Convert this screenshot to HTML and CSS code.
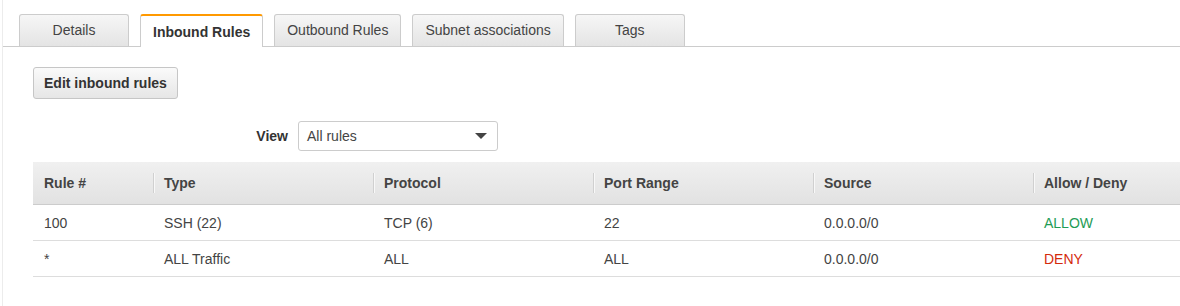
FILE: index.html
```html
<!DOCTYPE html>
<html lang="en">
<head>
    <title>Network ACL - Inbound Rules</title>
    <link rel="stylesheet" href="styles.css">
</head>
<body>
    <div class="panel">
        <ul class="tabs">
            <li class="tab">Details</li>
            <li class="tab active">Inbound Rules</li>
            <li class="tab">Outbound Rules</li>
            <li class="tab">Subnet associations</li>
            <li class="tab">Tags</li>
        </ul>

        <div class="content">
            <button class="edit-button">Edit inbound rules</button>

            <div class="filter-row">
                <label class="filter-label" for="viewSelect">View</label>
                <div class="select-box" id="viewSelect">
                    <span>All rules</span>
                    <span class="caret"></span>
                </div>
            </div>

            <div class="table-wrap">
                <table class="rules-table">
                    <colgroup>
                        <col class="col-rule">
                        <col class="col-wide">
                        <col class="col-wide">
                        <col class="col-wide">
                        <col class="col-wide">
                        <col class="col-wide">
                    </colgroup>
                    <thead>
                        <tr>
                            <th>Rule #</th>
                            <th>Type</th>
                            <th>Protocol</th>
                            <th>Port Range</th>
                            <th>Source</th>
                            <th>Allow / Deny</th>
                        </tr>
                    </thead>
                    <tbody>
                        <tr>
                            <td>100</td>
                            <td>SSH (22)</td>
                            <td>TCP (6)</td>
                            <td>22</td>
                            <td>0.0.0.0/0</td>
                            <td class="allow">ALLOW</td>
                        </tr>
                        <tr>
                            <td>*</td>
                            <td>ALL Traffic</td>
                            <td>ALL</td>
                            <td>ALL</td>
                            <td>0.0.0.0/0</td>
                            <td class="deny">DENY</td>
                        </tr>
                    </tbody>
                </table>
            </div>
        </div>
    </div>
</body>
</html>
```

FILE: styles.css
```css
/* CSS styles */

body {
    font-family: "Liberation Sans", Arial, sans-serif;
    font-size: 14px;
    color: #444;
    background-color: #fff;
    margin: 0;
    padding: 0;
}

.panel {
    margin-left: 2px;
    border-left: 1px solid #ececec;
    height: 306px;
    overflow: hidden;
    padding-top: 14px;
    box-sizing: border-box;
}

/* tabs */

.tabs {
    display: flex;
    gap: 11px;
    list-style: none;
    margin: 0;
    padding: 0 0 0 16px;
    border-bottom: 1px solid #ccc;
    height: 32px;
}

.tab {
    min-width: 110px;
    box-sizing: border-box;
    height: 32px;
    padding: 0 12px;
    line-height: 31px;
    text-align: center;
    color: #444;
    background: linear-gradient(#f6f6f6, #e4e4e4);
    border: 1px solid #ccc;
    border-bottom: none;
    border-radius: 3px 3px 0 0;
    cursor: pointer;
}

.tab.active {
    height: 33px;
    line-height: 32px;
    background: #fff;
    border-top: 2px solid #f90;
    font-weight: bold;
    color: #333;
}

/* content */

.content {
    padding: 20px 0 0 30px;
}

.edit-button {
    display: block;
    height: 32px;
    padding: 0 10px;
    font-family: inherit;
    font-size: 14px;
    font-weight: bold;
    color: #333;
    background: linear-gradient(#fafafa, #e6e6e6);
    border: 1px solid #c6c6c6;
    border-radius: 3px;
    cursor: pointer;
}

.filter-row {
    display: flex;
    align-items: center;
    margin-top: 22px;
}

.filter-label {
    width: 255px;
    text-align: right;
    font-weight: bold;
    color: #333;
    margin-right: 10px;
}

.select-box {
    display: flex;
    align-items: center;
    justify-content: space-between;
    width: 200px;
    height: 30px;
    box-sizing: border-box;
    padding: 0 8px 0 8px;
    border: 1px solid #ccc;
    border-radius: 3px;
    color: #444;
}

.caret {
    width: 0;
    height: 0;
    border-left: 6px solid transparent;
    border-right: 6px solid transparent;
    border-top: 6px solid #444;
    margin-right: 2px;
}

/* table */

.table-wrap {
    margin-top: 11px;
}

.rules-table {
    table-layout: fixed;
    width: 1220px;
    border-collapse: collapse;
}

.col-rule {
    width: 120px;
}

.col-wide {
    width: 220px;
}

th,
td {
    padding: 0 11px;
    text-align: left;
    white-space: nowrap;
}

th {
    position: relative;
    height: 42px;
    font-weight: bold;
    color: #444;
    background: linear-gradient(#f0f0f0, #e2e2e2);
    border-bottom: 1px solid #ccc;
}

th + th::before {
    content: "";
    position: absolute;
    left: 0;
    top: 11px;
    height: 20px;
    width: 1px;
    background-color: #d0d0d0;
    box-shadow: 1px 0 0 #f8f8f8;
}

td {
    height: 35px;
    border-bottom: 1px solid #ddd;
}

.allow {
    color: #1e9c55;
}

.deny {
    color: #d42a0c;
}
```
